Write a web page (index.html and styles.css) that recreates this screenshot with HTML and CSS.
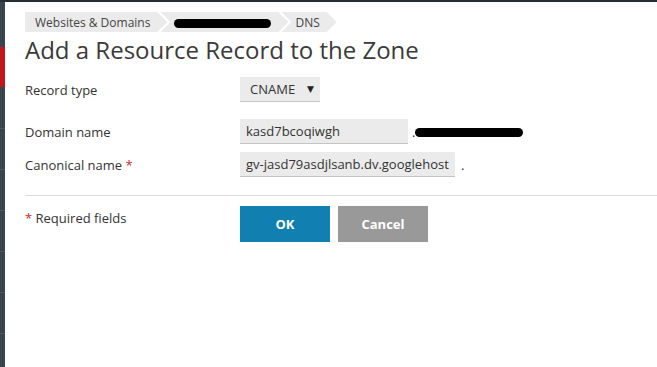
FILE: index.html
```html
<!DOCTYPE html>
<html lang="en">
<head>
  <meta charset="UTF-8" />
  <title>Add a Resource Record to the Zone</title>
  <link rel="stylesheet" href="styles.css">
</head>
<body>

<div class="topbar"></div>

<div class="page">
  <div class="sidebar">
    <div class="nav-item active"></div>
    <div class="nav-item"></div>
    <div class="nav-item"></div>
    <div class="nav-item"></div>
    <div class="nav-item"></div>
    <div class="nav-item"></div>
    <div class="nav-item"></div>
    <div class="nav-item"></div>
  </div>

  <div class="main">
    <div class="breadcrumbs">
      <a class="crumb" href="#">Websites &amp; Domains</a>
      <a class="crumb" href="#"><span class="redacted crumb-redacted"></span></a>
      <a class="crumb" href="#">DNS</a>
    </div>

    <h1 class="title">Add a Resource Record to the Zone</h1>

    <div class="form">
      <div class="form-row row-type">
        <label class="form-label">Record type</label>
        <div class="select">CNAME <span class="caret">&#9660;</span></div>
      </div>
      <div class="form-row row-domain">
        <label class="form-label">Domain name</label>
        <input type="text" class="form-input input-domain" value="kasd7bcoqiwgh">
        <span class="suffix">.</span><span class="redacted suffix-redacted"></span>
      </div>
      <div class="form-row row-canonical">
        <label class="form-label">Canonical name <span class="required">*</span></label>
        <input type="text" class="form-input input-canonical" value="gv-jasd79asdjlsanb.dv.googlehost">
        <span class="suffix dot">.</span>
      </div>
    </div>

    <div class="form-footer">
      <div class="required-note"><span class="required">*</span> Required fields</div>
      <div class="buttons">
        <button class="button button-ok">OK</button>
        <button class="button button-cancel">Cancel</button>
      </div>
    </div>
  </div>
</div>

</body>
</html>
```

FILE: styles.css
```css
body { margin: 0; padding: 0; background: #fff; font-family: 'Open Sans', 'DejaVu Sans', sans-serif; color: #333; overflow: hidden; }
.topbar { height: 2px; background: #252d35; }
.page { display: flex; height: 365px; }
.sidebar { width: 5px; background: #37434e; flex-shrink: 0; padding-top: 45px; }
.nav-item { height: 40px; border-bottom: 1px solid #4a5661; }
.nav-item.active { background: #c1161c; border-bottom-color: #37434e; }
.main { flex: 1; padding: 10px 0 0 20px; }

.breadcrumbs { display: flex; height: 20px; font-size: 12px; }
.crumb { display: flex; align-items: center; height: 20px; background: #ebebeb; color: #444; text-decoration: none; padding: 0 17px 0 10px; clip-path: polygon(0 0, calc(100% - 10px) 0, 100% 50%, calc(100% - 10px) 100%, 0 100%); }
.crumb + .crumb { margin-left: -7px; padding-left: 14px; clip-path: polygon(0 0, calc(100% - 10px) 0, 100% 50%, calc(100% - 10px) 100%, 0 100%, 10px 50%); }
.redacted { display: inline-block; background: #000; border-radius: 5px; }
.crumb-redacted { width: 97px; height: 9px; margin-top: 3px; }

.title { font-size: 24px; font-weight: normal; line-height: 30px; margin: 3px 0 0 0; color: #3a3a3a; }

.form { margin-top: 12px; font-size: 13px; }
.form-row { display: flex; align-items: center; }
.form-label { width: 215px; flex-shrink: 0; }
.required { color: #d0272b; }
.row-domain { margin-top: 17px; }
.row-canonical { margin-top: 8px; }
.select { width: 70px; height: 24px; line-height: 24px; padding-left: 10px; background: #ebebeb; border-bottom: 1px solid #c4c4c4; position: relative; }
.caret { position: absolute; right: 6px; top: 0; font-size: 9px; color: #222; }
.form-input { height: 24px; box-sizing: content-box; padding: 0 6px; border: none; border-bottom: 1px solid #c4c4c4; background: #ebebeb; font-family: inherit; font-size: 13px; color: #333; margin: 0; outline: none; }
.input-domain { width: 156px; }
.input-canonical { width: 203px; }
.suffix { margin-left: 4px; }
.dot { margin-left: 6px; }
.suffix-redacted { width: 108px; height: 9px; margin-left: 0; margin-top: 2px; }

.form-footer { margin-top: 18px; border-top: 1px solid #dcdcdc; padding-top: 10px; display: flex; font-size: 13px; }
.required-note { width: 215px; padding-top: 3px; }
.buttons { display: flex; gap: 8px; }
.button { width: 90px; height: 36px; border: none; color: #fff; font-family: inherit; font-size: 13px; font-weight: bold; cursor: pointer; }
.button-ok { background: #117fb0; }
.button-cancel { background: #999; }
```
